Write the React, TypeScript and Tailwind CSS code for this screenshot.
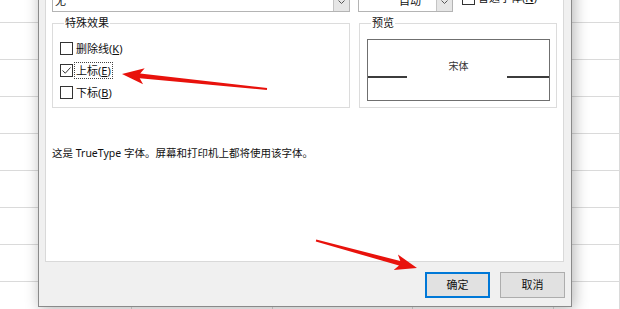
import { type ReactNode } from "react";

const ROWS = [23, 37, 37, 37, 37, 37, 37, 37, 37];
const COLS = [132, 141, 140, 141, 66];

function Sheet() {
  return (
    <div className="flex flex-col">
      {ROWS.map((h, r) => (
        <div key={r} className="flex" style={{ height: h }}>
          {COLS.map((w, c) => (
            <div
              key={c}
              className="border-b border-r border-[#dadada] bg-white"
              style={{ width: w }}
            />
          ))}
        </div>
      ))}
    </div>
  );
}

function Check({ checked = false }: { checked?: boolean }) {
  return (
    <span className="flex h-[13px] w-[13px] shrink-0 items-center justify-center border border-[#333] bg-white">
      {checked && (
        <svg width="11" height="11" viewBox="0 0 11 11">
          <path d="M1.5 5.5 L4.3 8.2 L9.5 2.5" fill="none" stroke="#333" strokeWidth="1" />
        </svg>
      )}
    </span>
  );
}

function Option({
  label,
  accel,
  checked,
  focused,
}: {
  label: string;
  accel: string;
  checked?: boolean;
  focused?: boolean;
}) {
  return (
    <div className="flex h-[22px] items-center gap-[1px]">
      <Check checked={checked} />
      <span
        className={`border px-[1px] leading-[15px] ${
          focused ? "border-dotted border-[#444]" : "border-transparent"
        }`}
      >
        {label}(<span className="underline underline-offset-1">{accel}</span>)
      </span>
    </div>
  );
}

function Group({
  title,
  className = "",
  children,
}: {
  title: string;
  className?: string;
  children: ReactNode;
}) {
  return (
    <fieldset className={`h-[92px] border border-[#dcdcdc] ${className}`}>
      <legend className="ml-[4px] px-[1px] leading-[14px]">{title}</legend>
      {children}
    </fieldset>
  );
}

function DropArrow() {
  return (
    <span className="flex h-full w-[16px] items-center justify-center border-l border-[#c4c4c4] bg-[#e6e6e6]">
      <svg width="7" height="4" viewBox="0 0 7 4">
        <path d="M0.5 0.5 L3.5 3.5 L6.5 0.5" fill="none" stroke="#555" strokeWidth="1" />
      </svg>
    </span>
  );
}

// red annotation arrow: thin tapering shaft plus a notched head
function arrowPoints(tx: number, ty: number, hx: number, hy: number) {
  const dx = hx - tx;
  const dy = hy - ty;
  const len = Math.hypot(dx, dy);
  const ux = dx / len;
  const uy = dy / len;
  const nx = -uy;
  const ny = ux;
  const headLen = 22;
  const headW = 8;
  const bx = hx - ux * headLen;
  const by = hy - uy * headLen;
  const kx = hx - ux * (headLen - 4);
  const ky = hy - uy * (headLen - 4);
  const pts = [
    [tx + nx * 0.9, ty + ny * 0.9],
    [kx + nx * 2.4, ky + ny * 2.4],
    [bx + nx * headW, by + ny * headW],
    [hx, hy],
    [bx - nx * headW, by - ny * headW],
    [kx - nx * 2.4, ky - ny * 2.4],
    [tx - nx * 0.9, ty - ny * 0.9],
  ];
  return pts.map((p) => `${p[0].toFixed(1)},${p[1].toFixed(1)}`).join(" ");
}

export default function App() {
  return (
    <div className="relative h-[309px] w-[620px] overflow-hidden bg-white font-['Noto_Sans','Noto_Sans_CJK_SC',sans-serif] text-[11px] text-[#111]">
      <Sheet />

      <div className="absolute left-[38px] top-[-30px] flex h-[337px] w-[534px] flex-col border border-[#8a8a8a] bg-[#f0f0f0] shadow-[2px_2px_14px_rgba(0,0,0,0.3)]">
        <div className="ml-[6px] mr-[7px] flex flex-1 flex-col border border-[#d9d9d9] bg-white pl-[6px] pt-[19px]">
          <div className="flex h-[21px] items-center">
            <div className="flex h-full w-[298px] items-center justify-between border border-[#b4b4b4] bg-white pl-[2px]">
              <span>无</span>
              <DropArrow />
            </div>
            <div className="ml-[8px] flex h-full w-[95px] items-center justify-between border border-[#b4b4b4] bg-white">
              <span className="pl-[40px]">自动</span>
              <DropArrow />
            </div>
            <div className="ml-[9px] flex items-center gap-[3px] pb-[6px]">
              <Check />
              <span>
                普通字体(<span className="underline">N</span>)
              </span>
            </div>
          </div>

          <div className="mt-[4px] flex gap-[9px]">
            <Group title="特殊效果" className="w-[298px] pl-[7px] pt-[7px]">
              <Option label="删除线" accel="K" />
              <Option label="上标" accel="E" checked focused />
              <Option label="下标" accel="B" />
            </Group>
            <Group title="预览" className="w-[198px] pl-[7px] pt-[9px]">
              <div className="flex h-[62px] w-[183px] flex-col border border-[#6f6f6f] bg-white">
                <div className="pt-[20px] text-center text-[10px] leading-[12px] text-[#333]">
                  宋体
                </div>
                <div className="mt-[4px] flex justify-between">
                  <span className="h-[2px] w-[39px] bg-[#3c3c3c]" />
                  <span className="h-[2px] w-[42px] bg-[#3c3c3c]" />
                </div>
              </div>
            </Group>
          </div>

          <p className="mt-[38px] text-[10.5px] leading-[14px]">
            这是 TrueType 字体。屏幕和打印机上都将使用该字体。
          </p>
        </div>

        <div className="mt-[10px] flex justify-end gap-[10px] pb-[8px] pr-[6px]">
          <button className="flex h-[26px] w-[65px] items-center justify-center border-2 border-[#0078d7] bg-[#e1e1e1]">
            确定
          </button>
          <button className="flex h-[26px] w-[65px] items-center justify-center border border-[#adadad] bg-[#e1e1e1]">
            取消
          </button>
        </div>
      </div>

      <svg className="pointer-events-none absolute inset-0" width="620" height="309">
        <polygon points={arrowPoints(267, 89, 122, 74)} fill="#e8120c" />
        <polygon points={arrowPoints(316, 240.5, 417, 268)} fill="#e8120c" />
      </svg>
    </div>
  );
}
